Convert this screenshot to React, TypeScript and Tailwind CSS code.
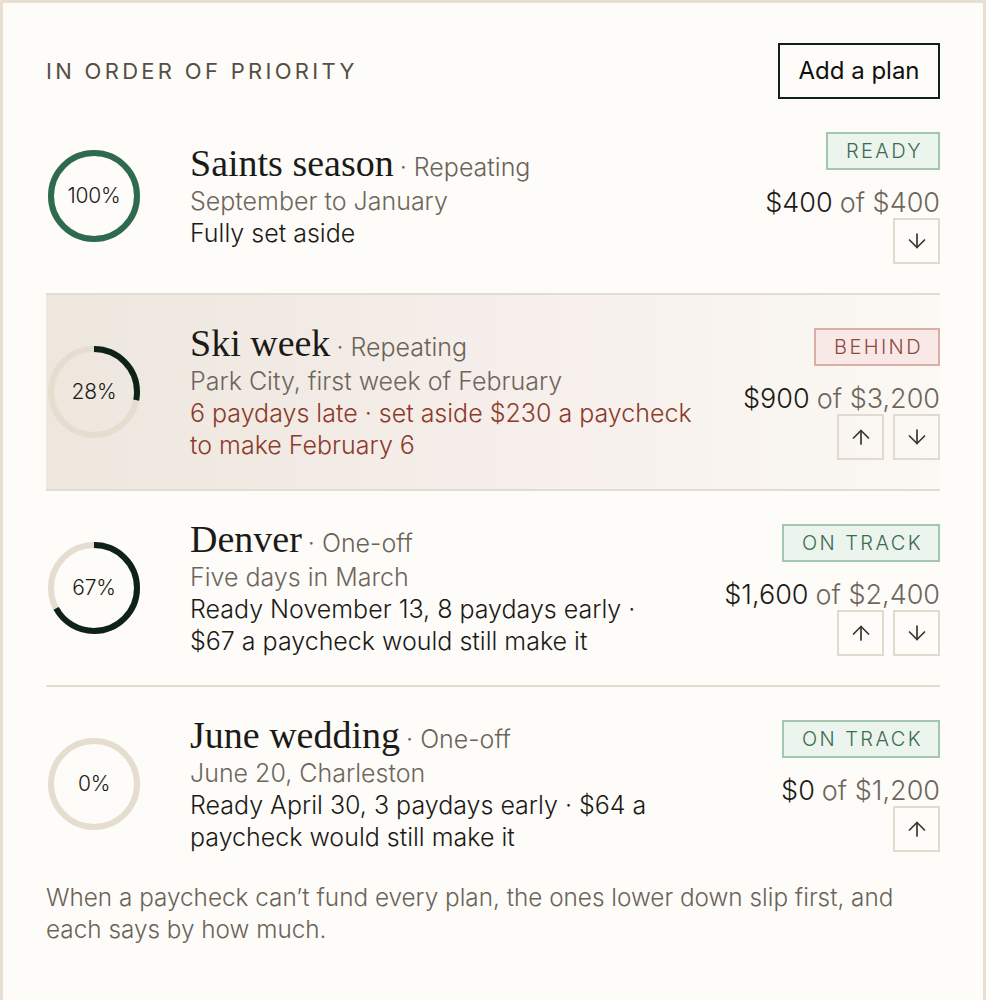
import React from "react";

type Plan = {
  title: string;
  kind: string;
  sub: string;
  lines: string[];
  pct: number;
  status: "READY" | "BEHIND" | "ON TRACK";
  have: string;
  total: string;
  up: boolean;
  down: boolean;
  highlight?: boolean;
};

const plans: Plan[] = [
  {
    title: "Saints season",
    kind: "Repeating",
    sub: "September to January",
    lines: ["Fully set aside"],
    pct: 100,
    status: "READY",
    have: "$400",
    total: "$400",
    up: false,
    down: true,
  },
  {
    title: "Ski week",
    kind: "Repeating",
    sub: "Park City, first week of February",
    lines: ["6 paydays late · set aside $230 a paycheck", "to make February 6"],
    pct: 28,
    status: "BEHIND",
    have: "$900",
    total: "$3,200",
    up: true,
    down: true,
    highlight: true,
  },
  {
    title: "Denver",
    kind: "One-off",
    sub: "Five days in March",
    lines: ["Ready November 13, 8 paydays early ·", "$67 a paycheck would still make it"],
    pct: 67,
    status: "ON TRACK",
    have: "$1,600",
    total: "$2,400",
    up: true,
    down: true,
  },
  {
    title: "June wedding",
    kind: "One-off",
    sub: "June 20, Charleston",
    lines: ["Ready April 30, 3 paydays early · $64 a", "paycheck would still make it"],
    pct: 0,
    status: "ON TRACK",
    have: "$0",
    total: "$1,200",
    up: true,
    down: false,
  },
];

function Ring({ pct }: { pct: number }) {
  const r = 43;
  const c = 2 * Math.PI * r;
  const full = pct >= 100;
  const color = full ? "#2e6a4d" : "#0f2218";
  return (
    <div className="relative w-[96px] h-[96px] shrink-0">
      <svg width="96" height="96" viewBox="0 0 96 96" className="absolute inset-0">
        <circle cx="48" cy="48" r={r} fill="none" stroke="#e4ddd0" strokeWidth="6" />
        {pct > 0 && (
          <circle
            cx="48"
            cy="48"
            r={r}
            fill="none"
            stroke={color}
            strokeWidth="6"
            strokeDasharray={`${(c * pct) / 100} ${c}`}
            transform="rotate(-90 48 48)"
          />
        )}
      </svg>
      <div className="absolute inset-0 flex items-center justify-center text-[21px] font-light text-[#1c1a17] tracking-[-0.01em]">
        {pct}%
      </div>
    </div>
  );
}

function Badge({ status }: { status: Plan["status"] }) {
  if (status === "BEHIND") {
    return (
      <div className="h-[38px] flex items-center border-2 border-[#dcaea6] bg-[#f9e9e6] text-[#8a4a3e] pl-[18px] pr-[15px] text-[20px] font-light tracking-[0.12em]">
        {status}
      </div>
    );
  }
  return (
    <div className="h-[38px] flex items-center border-2 border-[#a3c7ae] bg-[#ebf4ed] text-[#3d6b51] pl-[18px] pr-[15px] text-[20px] font-light tracking-[0.12em]">
      {status}
    </div>
  );
}

function ArrowBtn({ dir }: { dir: "up" | "down" }) {
  return (
    <button className="w-[47px] h-[46px] border-2 border-[#e1dacd] flex items-center justify-center text-[#3a352f]">
      <svg width="24" height="24" viewBox="0 0 24 24" fill="none" stroke="currentColor" strokeWidth="1.7" strokeLinecap="round" strokeLinejoin="round">
        {dir === "down" ? (
          <>
            <path d="M12 5v13.5" />
            <path d="M4.5 11l7.5 7.5 7.5-7.5" />
          </>
        ) : (
          <>
            <path d="M12 19V5.5" />
            <path d="M4.5 13l7.5-7.5 7.5 7.5" />
          </>
        )}
      </svg>
    </button>
  );
}

function Row({ p, last }: { p: Plan; last: boolean }) {
  return (
    <div
      className={
        "flex items-center py-[28px] " +
        (last ? "min-h-[194px] " : "min-h-[196px] border-b-2 border-[#e3dccf] ") +
        (p.highlight ? "bg-gradient-to-r from-[#ede7de] via-[#f6eeea] to-[#fbf9f4]" : "")
      }
    >
      <div className="w-[144px] shrink-0 flex items-center">
        <Ring pct={p.pct} />
      </div>
      <div className="flex-1 min-w-0 font-light">
        <div className="h-[42px] leading-[40px] whitespace-nowrap">
          <span className="font-['Liberation_Serif',serif] font-normal text-[38px] text-[#1c1a17]">{p.title}</span>
          <span className="text-[25px] text-[#6b6358] ml-[6px]">· {p.kind}</span>
        </div>
        <div className="text-[25px] leading-[32px] text-[#6e665c]">{p.sub}</div>
        {p.lines.map((l, i) => (
          <div
            key={i}
            className={
              "text-[25px] leading-[32px] " + (p.status === "BEHIND" ? "text-[#8c3b2b]" : "text-[#1c1a17]")
            }
          >
            {l}
          </div>
        ))}
      </div>
      <div className="flex flex-col items-end shrink-0 font-light pt-[4px]">
        <Badge status={p.status} />
        <div className="h-[48px] flex items-end text-[27px] leading-[31px]">
          <span className="text-[#1c1a17]">{p.have}</span>
          <span className="text-[#6e665c] ml-[7px]">of {p.total}</span>
        </div>
        <div className="flex gap-[9px]">
          {p.up && <ArrowBtn dir="up" />}
          {p.down && <ArrowBtn dir="down" />}
        </div>
      </div>
    </div>
  );
}

export default function App() {
  return (
    <div className="min-h-[1000px] bg-[#fdfcf8] border-t-[3px] border-l-[3px] border-r-[3px] border-[#e8dfd2] font-['Inter',sans-serif] text-[#1c1a17]">
      <div className="px-[43px] pt-[40px] pb-10">
        <div className="flex items-center justify-between">
          <div className="text-[22px] tracking-[0.15em] text-[#564e45]">IN ORDER OF PRIORITY</div>
          <button className="h-[56px] w-[162px] border-2 border-[#0f2218] text-[24px] text-[#12100d] flex items-center justify-center">
            Add a plan
          </button>
        </div>
        <div>
          {plans.map((p, i) => (
            <Row key={i} p={p} last={i === plans.length - 1} />
          ))}
        </div>
        <p className="text-[24.3px] font-light leading-[32px] text-[#6b6358]">
          When a paycheck can’t fund every plan, the ones lower down slip first, and each says by how much.
        </p>
      </div>
    </div>
  );
}
